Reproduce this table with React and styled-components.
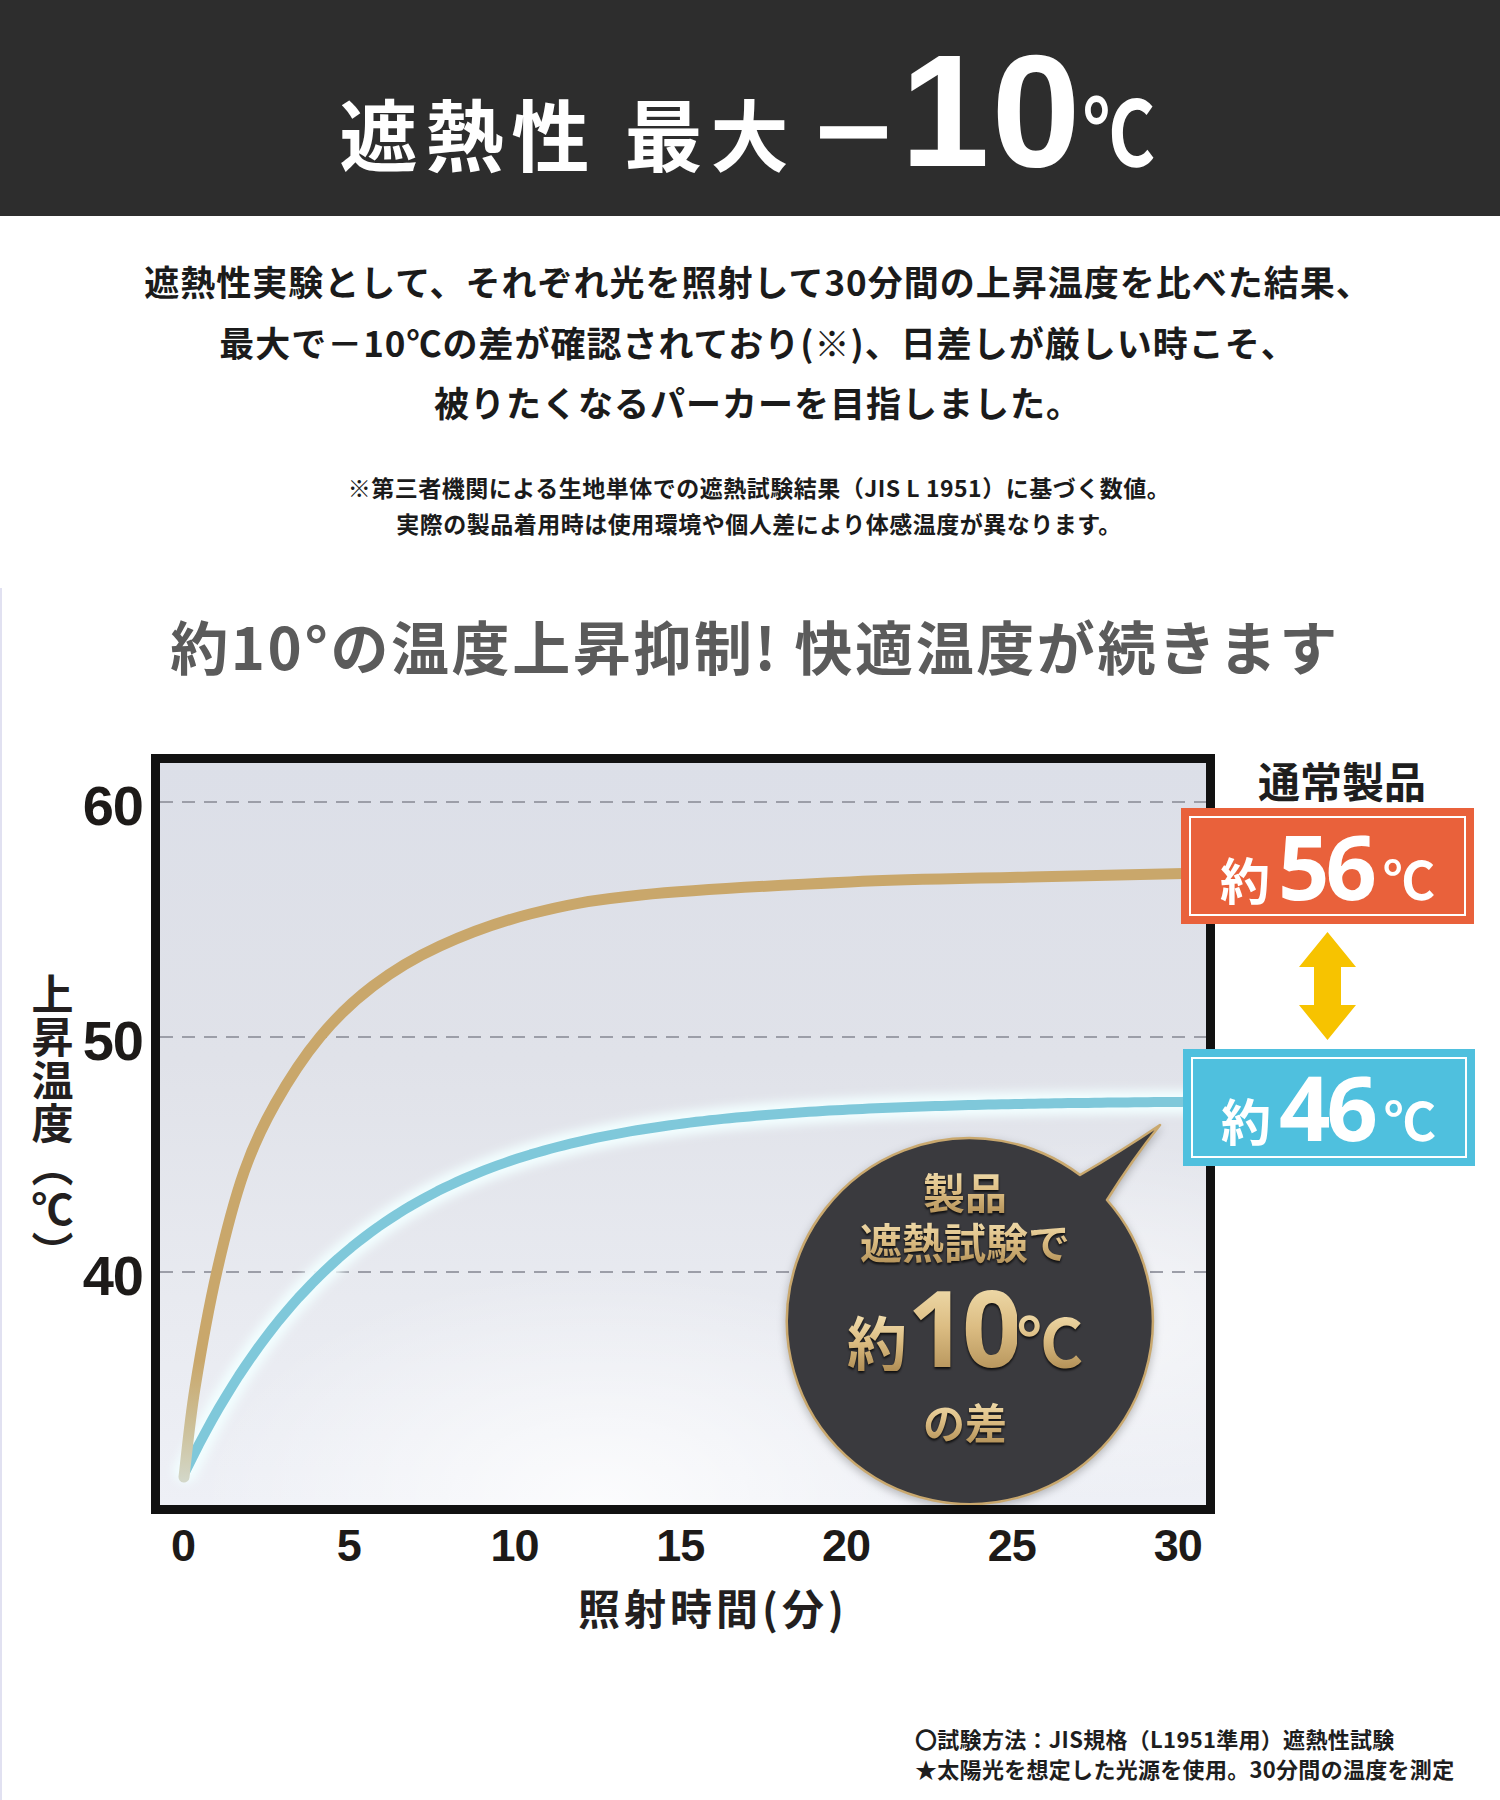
import React from "react";
import styled, { createGlobalStyle } from "styled-components";

const GlobalStyle = createGlobalStyle`
  html, body { margin: 0; padding: 0; background: #fff; }
  body {
    font-family: "Noto Sans CJK JP", "Noto Sans", sans-serif;
    color: #1b1b1b;
  }
  * { box-sizing: border-box; }
`;

const Page = styled.div`
  width: 1500px;
  background: #fff;
`;

const TitleBar = styled.header`
  height: 216px;
  background: #2d2d2d;
  padding-top: 31px;
`;

const Title = styled.h1`
  margin: 0;
  padding-left: 12px;
  display: flex;
  justify-content: center;
  align-items: baseline;
  color: #fff;
  font-weight: 700;
  line-height: 1;
`;

const TitleWord = styled.span`
  font-size: 78px;
  letter-spacing: 8px;
  margin-right: ${(p) => p.$gap || 0}px;
`;

const Minus = styled.span`
  font-size: 90px;
  -webkit-text-stroke: 3px #fff;
  margin-left: 12px;
`;

const BigNum = styled.span`
  font-family: "Liberation Sans", Arial, sans-serif;
  font-size: 160px;
  letter-spacing: 2px;
  margin-left: 2px;
`;

const TitleDeg = styled.span`
  font-size: 90px;
  margin-left: 0;
  transform: scaleX(0.8);
  transform-origin: left bottom;
`;

const Lead = styled.p`
  margin: 35px 0 0;
  padding-left: 16px;
  text-align: center;
  font-size: 35px;
  line-height: 60.5px;
  font-weight: 700;
  letter-spacing: 1px;
  color: #1b1b1b;
`;

const Notes = styled.p`
  margin: 36px 0 0;
  padding-left: 18px;
  text-align: center;
  font-size: 23px;
  line-height: 36px;
  font-weight: 700;
  letter-spacing: 0.5px;
  color: #1b1b1b;
`;

const Section = styled.section`
  margin-top: 47px;
  border-left: 2px solid #e1e1f1;
  padding: 17px 0 17px;
`;

const Heading = styled.h2`
  margin: 0;
  padding-left: 8px;
  text-align: center;
  font-size: 58px;
  line-height: 80px;
  letter-spacing: 2.6px;
  color: #5b5b5b;
  font-weight: 700;
`;

const ChartRow = styled.div`
  display: flex;
  align-items: flex-start;
  margin-top: 69px;
`;

const AxisTitle = styled.div`
  writing-mode: vertical-rl;
  margin: 219px 0 0 30px;
  width: 41px;
  font-size: 42px;
  line-height: 41px;
  letter-spacing: 1px;
  font-weight: 700;
  color: #231f1f;
`;

const YLabels = styled.div`
  width: 63px;
  margin-left: 7px;
  padding-top: 22px;
  display: flex;
  flex-direction: column;
  gap: 175px;
  text-align: right;
`;

const AxisNum = styled.div`
  font-family: "Liberation Sans", Arial, sans-serif;
  font-weight: 700;
  font-size: ${(p) => p.$size || 56}px;
  line-height: 60px;
  letter-spacing: -1px;
  color: #1d1a18;
  text-align: ${(p) => p.$align || "right"};
`;

const ChartBox = styled.div`
  position: relative;
  flex-shrink: 0;
  width: 1064px;
  height: 760px;
  margin-left: 8px;
  border: 9px solid #111;
  background:
    radial-gradient(ellipse 55% 45% at 42% 100%, rgba(255,255,255,0.8), rgba(255,255,255,0) 70%),
    radial-gradient(ellipse 40% 35% at 90% 75%, rgba(255,255,255,0.6), rgba(255,255,255,0) 70%),
    linear-gradient(180deg, #dcdfe8 0%, #e0e2e9 40%, #e8eaf0 72%, #eef0f6 100%);
`;

const Plot = styled.svg`
  display: block;
  width: 100%;
  height: 100%;
`;

const BubbleShape = styled.svg`
  position: absolute;
  left: 620px;
  top: 357px;
  width: 385px;
  height: 385px;
  filter: drop-shadow(0 3px 4px rgba(0, 0, 0, 0.25));
`;

const BubbleText = styled.div`
  position: absolute;
  left: 622px;
  top: 370px;
  width: 366px;
  height: 366px;
  padding-top: 33px;
  display: flex;
  flex-direction: column;
  align-items: center;
  font-weight: 700;
`;

const Gold = styled.span`
  display: block;
  font-size: ${(p) => p.$size}px;
  line-height: ${(p) => p.$lh || 1};
  margin-top: ${(p) => p.$mt || 0}px;
  letter-spacing: ${(p) => p.$ls || 0}px;
  font-family: ${(p) => (p.$latin ? '"Noto Sans", sans-serif' : "inherit")};
  background: linear-gradient(180deg, #f4e2b4 0%, #dcbd83 50%, #b08e55 100%);
  -webkit-background-clip: text;
  background-clip: text;
  color: transparent;
  filter: drop-shadow(0 2px 1px rgba(0, 0, 0, 0.75));
`;

const GoldRow = styled.div`
  display: flex;
  align-items: baseline;
  margin-top: 8px;
`;

const RightPanel = styled.div`
  position: relative;
  z-index: 1;
  margin-left: -35px;
  width: 295px;
  display: flex;
  flex-direction: column;
  align-items: center;
`;

const PanelLabel = styled.div`
  margin-top: 4px;
  padding-left: 29px;
  font-size: 42px;
  line-height: 44px;
  font-weight: 700;
  color: #1e1e1e;
`;

const TempBox = styled.div`
  width: ${(p) => p.$w}px;
  height: ${(p) => p.$h}px;
  margin-top: ${(p) => p.$mt}px;
  margin-left: ${(p) => p.$ml || 0}px;
  background: ${(p) => p.$color};
  outline: 2px solid #fff;
  outline-offset: -10px;
  display: flex;
  justify-content: center;
  align-items: baseline;
  padding-top: 12px;
  color: #fff;
  font-weight: 700;
`;

const Approx = styled.span`
  font-size: 50px;
  line-height: 1;
  margin-right: 8px;
`;

const TempNum = styled.span`
  font-family: "Open Sans", "Noto Sans", sans-serif;
  font-size: 90px;
  line-height: 1;
  letter-spacing: -4px;
`;

const TempUnit = styled.span`
  font-size: 52px;
  line-height: 1;
  margin-left: 10px;
`;

const Arrow = styled.svg`
  display: block;
  width: 57px;
  height: 108px;
  margin-top: 8px;
`;

const XLabels = styled.div`
  display: grid;
  grid-template-columns: repeat(7, 165.8px);
  margin: 2px 0 0 98px;
`;

const XTitle = styled.div`
  margin: 6px 0 0 576px;
  font-size: 42px;
  line-height: 50px;
  font-weight: 700;
  letter-spacing: 4px;
  color: #231f1f;
`;

const Footnote = styled.p`
  margin: 91px 0 0 913px;
  font-size: 22px;
  line-height: 30px;
  font-weight: 700;
  letter-spacing: 0.3px;
  color: #1e1e1e;
`;

function smoothPath(pts) {
  let d = `M${pts[0][0]} ${pts[0][1]}`;
  for (let i = 0; i < pts.length - 1; i++) {
    const p0 = pts[i - 1] || pts[i];
    const p1 = pts[i];
    const p2 = pts[i + 1];
    const p3 = pts[i + 2] || p2;
    const c1 = [p1[0] + (p2[0] - p0[0]) / 6, p1[1] + (p2[1] - p0[1]) / 6];
    const c2 = [p2[0] - (p3[0] - p1[0]) / 6, p2[1] - (p3[1] - p1[1]) / 6];
    d += ` C${c1[0].toFixed(1)} ${c1[1].toFixed(1)} ${c2[0].toFixed(1)} ${c2[1].toFixed(1)} ${p2[0]} ${p2[1]}`;
  }
  return d;
}

// plot mapping: minutes -> x, degrees -> y
const tx = (t) => 183 + t * 33.17;
const ty = (T) => 1272 - (T - 40) * 23.5;

function curvePath(fn, t0, t1, step) {
  const pts = [];
  for (let t = t0; t <= t1 + 1e-6; t += step) {
    pts.push(`${tx(t).toFixed(1)} ${ty(fn(t)).toFixed(1)}`);
  }
  return "M" + pts.join(" L");
}

const GOLD = [
  [184, 1477], [195, 1388], [217, 1271], [244, 1172], [275, 1104],
  [320, 1037], [373, 986], [440, 946], [530, 914], [641, 895],
  [850, 882], [1030, 877], [1210, 873],
];
const blueTemp = (t) => 31.3 + 16 * (1 - Math.exp(-t / 5.4));
const GRID = [802, 1037, 1272];
const XTICKS = ["0", "5", "10", "15", "20", "25", "30"];

export default function App() {
  const goldD = smoothPath(GOLD);
  const blueD = curvePath(blueTemp, 0.08, 30.8, 0.2);
  return (
    <Page>
      <GlobalStyle />
      <TitleBar>
        <Title>
          <TitleWord $gap={27}>遮熱性</TitleWord>
          <TitleWord>最大</TitleWord>
          <Minus>－</Minus>
          <BigNum>10</BigNum>
          <TitleDeg>℃</TitleDeg>
        </Title>
      </TitleBar>

      <Lead>
        遮熱性実験として、それぞれ光を照射して30分間の上昇温度を比べた結果、
        <br />
        最大で－10℃の差が確認されており(※)、日差しが厳しい時こそ、
        <br />
        被りたくなるパーカーを目指しました。
      </Lead>

      <Notes>
        ※第三者機関による生地単体での遮熱試験結果（JIS L 1951）に基づく数値。
        <br />
        実際の製品着用時は使用環境や個人差により体感温度が異なります。
      </Notes>

      <Section>
        <Heading>約10°の温度上昇抑制! 快適温度が続きます</Heading>

        <ChartRow>
          <AxisTitle>上昇温度（℃）</AxisTitle>
          <YLabels>
            <AxisNum>60</AxisNum>
            <AxisNum>50</AxisNum>
            <AxisNum>40</AxisNum>
          </YLabels>

          <ChartBox>
            <Plot viewBox="160 763 1046 742" preserveAspectRatio="none">
              <defs>
                <linearGradient id="goldFade" gradientUnits="userSpaceOnUse" x1="0" y1="1480" x2="0" y2="1360">
                  <stop offset="0" stopColor="#d3d7c8" />
                  <stop offset="0.45" stopColor="#ccbf97" />
                  <stop offset="1" stopColor="#c9a76b" />
                </linearGradient>
                <filter id="glow" x="-10%" y="-10%" width="120%" height="120%">
                  <feGaussianBlur stdDeviation="5" />
                </filter>
              </defs>
              {GRID.map((y) => (
                <line key={y} x1="160" x2="1206" y1={y} y2={y} stroke="#9c9ea8" strokeWidth="2" strokeDasharray="13 9" />
              ))}
              <path d={blueD} fill="none" stroke="#f2feff" strokeWidth="24" strokeLinecap="round" filter="url(#glow)" />
              <path d={blueD} fill="none" stroke="#7fc8da" strokeWidth="10" strokeLinecap="round" strokeLinejoin="round" />
              <path d={goldD} fill="none" stroke="url(#goldFade)" strokeWidth="11" strokeLinecap="round" />
            </Plot>

            <BubbleShape viewBox="0 0 385 385">
              <path
                d="M300 55 Q340 32 380 5 Q352 40 327 80 A183 183 0 1 1 300 55 Z"
                fill="#3a3a3e"
                stroke="#c9a86e"
                strokeWidth="2.5"
                strokeLinejoin="round"
              />
            </BubbleShape>
            <BubbleText>
              <Gold $size={42} $lh={50 / 42}>製品</Gold>
              <Gold $size={42} $lh={50 / 42}>遮熱試験で</Gold>
              <GoldRow>
                <Gold $size={60}>約</Gold>
                <Gold $size={105} $latin $ls={-5}>10</Gold>
                <Gold $size={66}>℃</Gold>
              </GoldRow>
              <Gold $size={42} $lh={50 / 42} $mt={17}>の差</Gold>
            </BubbleText>
          </ChartBox>

          <RightPanel>
            <PanelLabel>通常製品</PanelLabel>
            <TempBox $w={293} $h={116} $mt={6} $color="#e9613b">
              <Approx>約</Approx>
              <TempNum>56</TempNum>
              <TempUnit>℃</TempUnit>
            </TempBox>
            <Arrow viewBox="0 0 57 108">
              <path d="M28.5 0 L57 35 L42 35 L42 73 L57 73 L28.5 108 L0 73 L15 73 L15 35 L0 35 Z" fill="#f7c300" />
            </Arrow>
            <TempBox $w={292} $h={117} $mt={9} $ml={2} $color="#4fc0de">
              <Approx>約</Approx>
              <TempNum>46</TempNum>
              <TempUnit>℃</TempUnit>
            </TempBox>
          </RightPanel>
        </ChartRow>

        <XLabels>
          {XTICKS.map((t) => (
            <AxisNum key={t} $size={45} $align="center">{t}</AxisNum>
          ))}
        </XLabels>
        <XTitle>照射時間(分)</XTitle>

        <Footnote>
          〇試験方法：JIS規格（L1951準用）遮熱性試験
          <br />
          ★太陽光を想定した光源を使用。30分間の温度を測定
        </Footnote>
      </Section>
    </Page>
  );
}
